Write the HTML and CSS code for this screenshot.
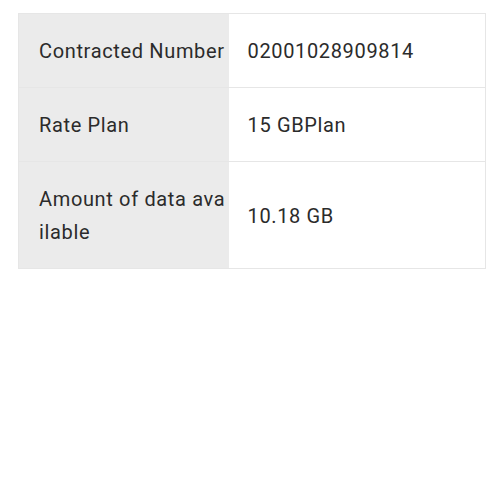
FILE: index.html
```html
<!DOCTYPE html>
<html lang="en">
<head>
  <meta charset="UTF-8" />
  <meta name="viewport" content="width=device-width, initial-scale=1" />
  <title>Contract Info</title>
  <link rel="stylesheet" href="styles.css">
</head>
<body>
  <table class="info-table">
    <tr>
      <th>Contracted Number</th>
      <td>02001028909814</td>
    </tr>
    <tr>
      <th>Rate Plan</th>
      <td>15 GBPlan</td>
    </tr>
    <tr class="tall">
      <th>Amount of data available</th>
      <td>10.18 GB</td>
    </tr>
  </table>
</body>
</html>
```

FILE: styles.css
```css
body {
  margin: 0;
  padding: 13px 14px 0 18px;
  font-family: Roboto, 'Noto Sans', sans-serif;
  background: #fff;
  color: #2b2b2b;
}

.info-table {
  width: 100%;
  border-collapse: collapse;
  border: 1px solid #e6e6e6;
  table-layout: fixed;
}

.info-table tr {
  height: 74px;
}

.info-table tr.tall {
  height: 107px;
}

.info-table th,
.info-table td {
  border-bottom: 1px solid #e6e6e6;
  font-size: 20px;
  font-weight: normal;
  text-align: left;
  vertical-align: middle;
  line-height: 33px;
  letter-spacing: 0.65px;
  word-break: break-all;
  padding-top: 2px;
}

.info-table th {
  width: 210px;
  padding: 2px 1px 0 20px;
  background: #ebebeb;
  box-sizing: border-box;
}

.info-table td {
  padding: 2px 19px 0;
  background: #fff;
}
```
